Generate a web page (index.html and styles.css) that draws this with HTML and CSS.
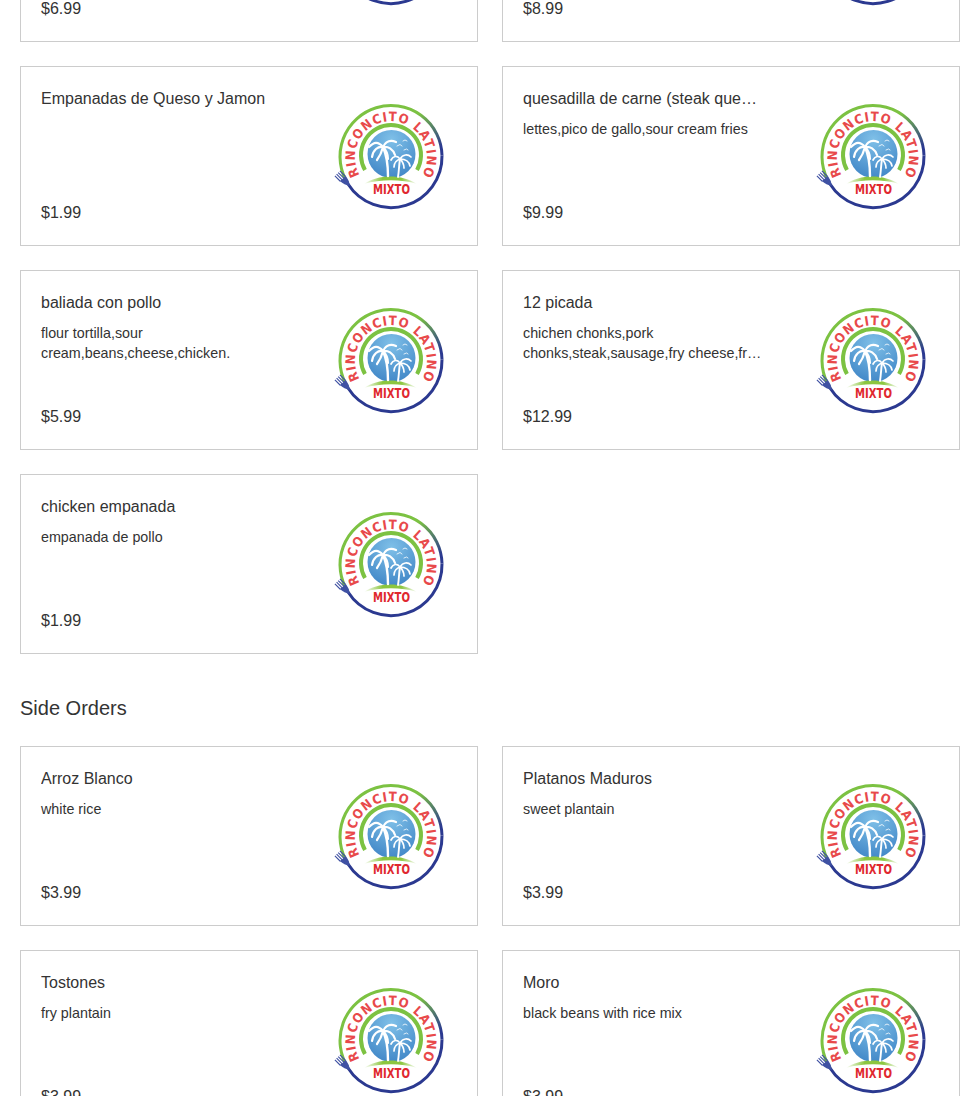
FILE: index.html
```html
<!DOCTYPE html>
<html lang="en">
<head>
<meta charset="utf-8">
<title>Menu</title>
<link rel="stylesheet" href="styles.css">
</head>
<body>
<svg class="defs" width="0" height="0" aria-hidden="true">
  <defs>
    <linearGradient id="ring" gradientUnits="userSpaceOnUse" x1="88" y1="14" x2="112" y2="46">
      <stop offset="0" stop-color="#7cc242"/>
      <stop offset="1" stop-color="#2b3990"/>
    </linearGradient>
    <linearGradient id="swoosh" x1="0" y1="0" x2="1" y2="0">
      <stop offset="0" stop-color="#fff"/>
      <stop offset="0.35" stop-color="#8cc63f"/>
      <stop offset="0.7" stop-color="#8cc63f"/>
      <stop offset="1" stop-color="#fff"/>
    </linearGradient>
    <radialGradient id="sky" cx="0.5" cy="0.2" r="0.85">
      <stop offset="0" stop-color="#7fc0e8"/>
      <stop offset="1" stop-color="#3f85c6"/>
    </radialGradient>
    <path id="arc" d="M29.700 75A36 36 0 1 1 92.300 75"/>
    <symbol id="logo" viewBox="0 0 120 112">
      <path d="M18 84A51 51 0 1 1 112 55.500" fill="none" stroke="url(#ring)" stroke-width="3"/>
      <path d="M112 55.500A51 51 0 0 1 18 84" fill="none" stroke="#2b3990" stroke-width="3"/>
      <path d="M10 81L15.900 76Q19 80 20 86Q14 85 10 81Z" fill="#3f51a3"/>
      <path d="M10.500 81.500L4.900 75.900M12.200 79.800L6.600 74.200M13.800 78.200L8.200 72.600M15.500 76.500L9.900 70.900" stroke="#3f51a3" stroke-width="1.100" fill="none"/>
      <path d="M35 70A30 30 0 1 1 87 70" fill="none" stroke="#7cc242" stroke-width="4"/>
      <circle cx="61.500" cy="54" r="24" fill="url(#sky)"/>
      <path d="M32 78H91V84H32Z" fill="#fff"/>
      <path d="M34 84C48 74 72 74 87 84C72 79 50 79 34 84Z" fill="url(#swoosh)"/>
      <g fill="none" stroke="#fff" stroke-linecap="round">
        <path d="M58 76C58 66 57 56 53 47" stroke-width="2.400"/>
        <path d="M53 47C48 41 44 42 39 47M53 47C48 46 43 50 42 57M53 47C52 51 50 56 47 60M53 47C56 41 61 40 66 42M53 47C58 46 63 49 65 55M53 47C56 50 58 54 58 59" stroke-width="2.200"/>
        <path d="M68 77C69 71 69 65 70 59" stroke-width="1.900"/>
        <path d="M70 59C67 55 63 56 61 60M70 59C67 60 64 63 64 67M70 59C73 54 78 54 81 57M70 59C75 59 79 61 80 66M70 59C72 61 74 65 74 68" stroke-width="1.700"/>
        <path d="M67 46L70 44.500L72 46M74 50L76.500 49L78 50M73 41L75 40L77 41" stroke-width="0.800"/>
      </g>
      <text class="logo-ring"><textPath href="#arc" textLength="150" lengthAdjust="spacing">RINCONCITO LATINO</textPath></text>
      <text class="logo-mixto" x="61.500" y="94" text-anchor="middle" textLength="37" lengthAdjust="spacingAndGlyphs">MIXTO</text>
    </symbol>
  </defs>
</svg>

<main class="page">
  <section class="grid">
    <article class="card">
      <div class="info"><h3 class="name">Carne</h3><div class="price">$6.99</div></div>
      <svg class="logo"><use href="#logo"/></svg>
    </article>
    <article class="card">
      <div class="info"><h3 class="name">Carne</h3><div class="price">$8.99</div></div>
      <svg class="logo"><use href="#logo"/></svg>
    </article>
    <article class="card">
      <div class="info"><h3 class="name">Empanadas de Queso y Jamon</h3><div class="price">$1.99</div></div>
      <svg class="logo"><use href="#logo"/></svg>
    </article>
    <article class="card">
      <div class="info"><h3 class="name">quesadilla de carne (steak quesadilla)</h3><p class="desc">lettes,pico de gallo,sour cream fries</p><div class="price">$9.99</div></div>
      <svg class="logo"><use href="#logo"/></svg>
    </article>
    <article class="card">
      <div class="info"><h3 class="name">baliada con pollo</h3><p class="desc">flour tortilla,sour cream,beans,cheese,chicken.</p><div class="price">$5.99</div></div>
      <svg class="logo"><use href="#logo"/></svg>
    </article>
    <article class="card">
      <div class="info"><h3 class="name">12 picada</h3><p class="desc">chichen chonks,pork chonks,steak,sausage,fry cheese,fr…</p><div class="price">$12.99</div></div>
      <svg class="logo"><use href="#logo"/></svg>
    </article>
    <article class="card">
      <div class="info"><h3 class="name">chicken empanada</h3><p class="desc">empanada de pollo</p><div class="price">$1.99</div></div>
      <svg class="logo"><use href="#logo"/></svg>
    </article>
  </section>

  <h2 class="section-title">Side Orders</h2>

  <section class="grid">
    <article class="card">
      <div class="info"><h3 class="name">Arroz Blanco</h3><p class="desc">white rice</p><div class="price">$3.99</div></div>
      <svg class="logo"><use href="#logo"/></svg>
    </article>
    <article class="card">
      <div class="info"><h3 class="name">Platanos Maduros</h3><p class="desc">sweet plantain</p><div class="price">$3.99</div></div>
      <svg class="logo"><use href="#logo"/></svg>
    </article>
    <article class="card">
      <div class="info"><h3 class="name">Tostones</h3><p class="desc">fry plantain</p><div class="price">$3.99</div></div>
      <svg class="logo"><use href="#logo"/></svg>
    </article>
    <article class="card">
      <div class="info"><h3 class="name">Moro</h3><p class="desc">black beans with rice mix</p><div class="price">$3.99</div></div>
      <svg class="logo"><use href="#logo"/></svg>
    </article>
  </section>
</main>
</body>
</html>
```

FILE: styles.css
```css
html, body {
  margin: 0;
  height: 1096px;
  overflow: hidden;
  background: #fff;
}

body {
  font-family: "Liberation Sans", Arial, sans-serif;
  color: #333;
}

.defs {
  position: absolute;
}

.page {
  margin-top: -138px;
  padding: 0 5px 0 20px;
}

.grid {
  display: grid;
  grid-template-columns: 458px 458px;
  gap: 24px;
}

.card {
  box-sizing: border-box;
  height: 180px;
  border: 1px solid #ccc;
  padding: 20px;
  display: flex;
  justify-content: space-between;
}

.info {
  width: 240px;
  display: flex;
  flex-direction: column;
  min-width: 0;
}

.name {
  margin: 0 0 8px;
  font-size: 16px;
  font-weight: 400;
  line-height: 24px;
  white-space: nowrap;
  overflow: hidden;
  text-overflow: ellipsis;
}

.desc {
  margin: 0;
  font-size: 14.3px;
  line-height: 20px;
}

.price {
  margin-top: auto;
  font-size: 16px;
  line-height: 24px;
}

.logo {
  width: 120px;
  height: 112px;
  margin: 13px 7px 0 0;
}

.section-title {
  margin: 40px 0 24px;
  font-size: 20px;
  font-weight: 400;
  line-height: 28px;
}

.logo-ring {
  font-family: "Liberation Sans Narrow", "DejaVu Sans Condensed", sans-serif;
  font-weight: 700;
  font-size: 13px;
  fill: #e8494a;
}

.logo-mixto {
  font-family: "Liberation Sans Narrow", "DejaVu Sans Condensed", sans-serif;
  font-weight: 700;
  font-size: 14px;
  fill: #e0282e;
}
```
